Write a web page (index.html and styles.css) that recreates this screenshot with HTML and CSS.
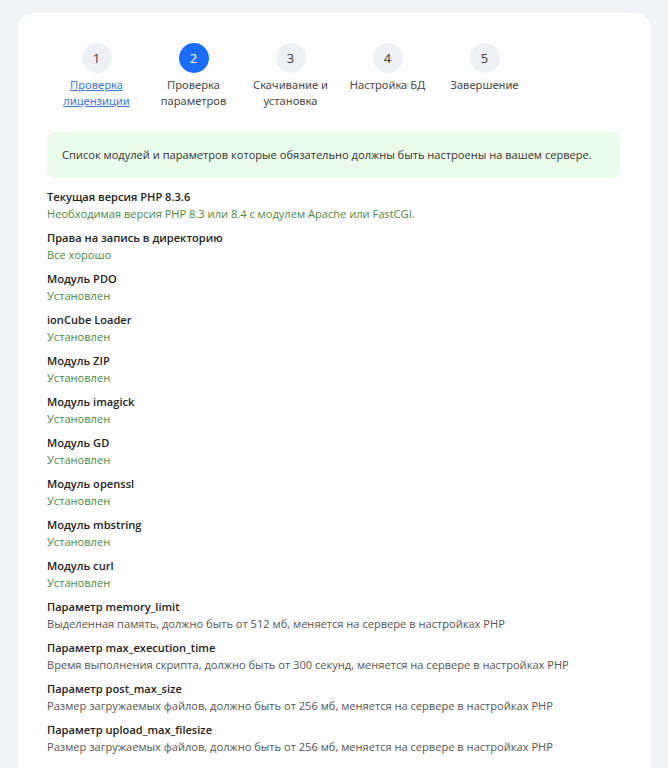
FILE: index.html
```html
<!DOCTYPE html>
<html lang="ru">
  <head>
    <meta charset="UTF-8" />
    <meta name="viewport" content="width=device-width, initial-scale=1.0" />
    <title>Установка — проверка параметров</title>
    <link rel="stylesheet" href="styles.css">
  </head>
  <body>
    <div class="install-card">
      <ul class="steps">
        <li class="step">
          <span class="step-num">1</span>
          <a href="#" class="step-label">Проверка лицензиции</a>
        </li>
        <li class="step step-active">
          <span class="step-num">2</span>
          <span class="step-label">Проверка параметров</span>
        </li>
        <li class="step">
          <span class="step-num">3</span>
          <span class="step-label">Скачивание и установка</span>
        </li>
        <li class="step">
          <span class="step-num">4</span>
          <span class="step-label">Настройка БД</span>
        </li>
        <li class="step">
          <span class="step-num">5</span>
          <span class="step-label">Завершение</span>
        </li>
      </ul>

      <div class="notice">
        Список модулей и параметров которые обязательно должны быть настроены на вашем сервере.
      </div>

      <div class="checks">
        <div class="check">
          <div class="check-title">Текущая версия PHP 8.3.6</div>
          <div class="check-ok">Необходимая версия PHP 8.3 или 8.4 с модулем Apache или FastCGI.</div>
        </div>
        <div class="check">
          <div class="check-title">Права на запись в директорию</div>
          <div class="check-ok">Все хорошо</div>
        </div>
        <div class="check">
          <div class="check-title">Модуль PDO</div>
          <div class="check-ok">Установлен</div>
        </div>
        <div class="check">
          <div class="check-title">ionCube Loader</div>
          <div class="check-ok">Установлен</div>
        </div>
        <div class="check">
          <div class="check-title">Модуль ZIP</div>
          <div class="check-ok">Установлен</div>
        </div>
        <div class="check">
          <div class="check-title">Модуль imagick</div>
          <div class="check-ok">Установлен</div>
        </div>
        <div class="check">
          <div class="check-title">Модуль GD</div>
          <div class="check-ok">Установлен</div>
        </div>
        <div class="check">
          <div class="check-title">Модуль openssl</div>
          <div class="check-ok">Установлен</div>
        </div>
        <div class="check">
          <div class="check-title">Модуль mbstring</div>
          <div class="check-ok">Установлен</div>
        </div>
        <div class="check">
          <div class="check-title">Модуль curl</div>
          <div class="check-ok">Установлен</div>
        </div>
        <div class="check">
          <div class="check-title">Параметр memory_limit</div>
          <div class="check-info">Выделенная память, должно быть от 512 мб, меняется на сервере в настройках PHP</div>
        </div>
        <div class="check">
          <div class="check-title">Параметр max_execution_time</div>
          <div class="check-info">Время выполнения скрипта, должно быть от 300 секунд, меняется на сервере в настройках PHP</div>
        </div>
        <div class="check">
          <div class="check-title">Параметр post_max_size</div>
          <div class="check-info">Размер загружаемых файлов, должно быть от 256 мб, меняется на сервере в настройках PHP</div>
        </div>
        <div class="check">
          <div class="check-title">Параметр upload_max_filesize</div>
          <div class="check-info">Размер загружаемых файлов, должно быть от 256 мб, меняется на сервере в настройках PHP</div>
        </div>
      </div>
    </div>
  </body>
</html>
```

FILE: styles.css
```css
body {
  font-family: "Open Sans", "Noto Sans", Arial, sans-serif;
  font-size: 11.1px;
  color: #222;
  background-color: #f1f2f5;
  margin: 0;
  padding: 13px 17px 0 18px;
}

.install-card {
  background-color: #fff;
  border-radius: 16px 16px 0 0;
  padding: 30px 31px 40px 29px;
  min-height: 800px;
}

/* шаги установки */
.steps {
  list-style: none;
  margin: 0 0 23px;
  padding: 0;
  display: flex;
}

.step {
  width: 97px;
  display: flex;
  flex-direction: column;
  align-items: center;
  text-align: center;
  font-family: "Noto Sans", Arial, sans-serif;
}

.step:first-child {
  margin-left: 1px;
}

.step-num {
  width: 30px;
  height: 30px;
  border-radius: 50%;
  background-color: #eff0f4;
  color: #444;
  font-size: 13px;
  display: flex;
  align-items: center;
  justify-content: center;
  margin-bottom: 4px;
}

.step-active .step-num {
  background-color: #1b6cfb;
  color: #fff;
}

.step-label {
  color: #4a4a4a;
  font-size: 11.2px;
  line-height: 16px;
  max-width: 84px;
}

a.step-label {
  color: #3c78d8;
  text-decoration: underline;
}

.notice {
  background-color: #eafcea;
  border-radius: 8px;
  padding: 15px 15px;
  line-height: 16px;
  color: #333;
  margin-bottom: 11px;
}

.check {
  margin-bottom: 7px;
  line-height: 17px;
}

.check:first-child {
  margin-top: -1px;
}

.check-title {
  font-weight: 600;
  color: #222;
}

.check-ok {
  color: #4b8a3f;
}

.check-info {
  color: #555;
}
```
